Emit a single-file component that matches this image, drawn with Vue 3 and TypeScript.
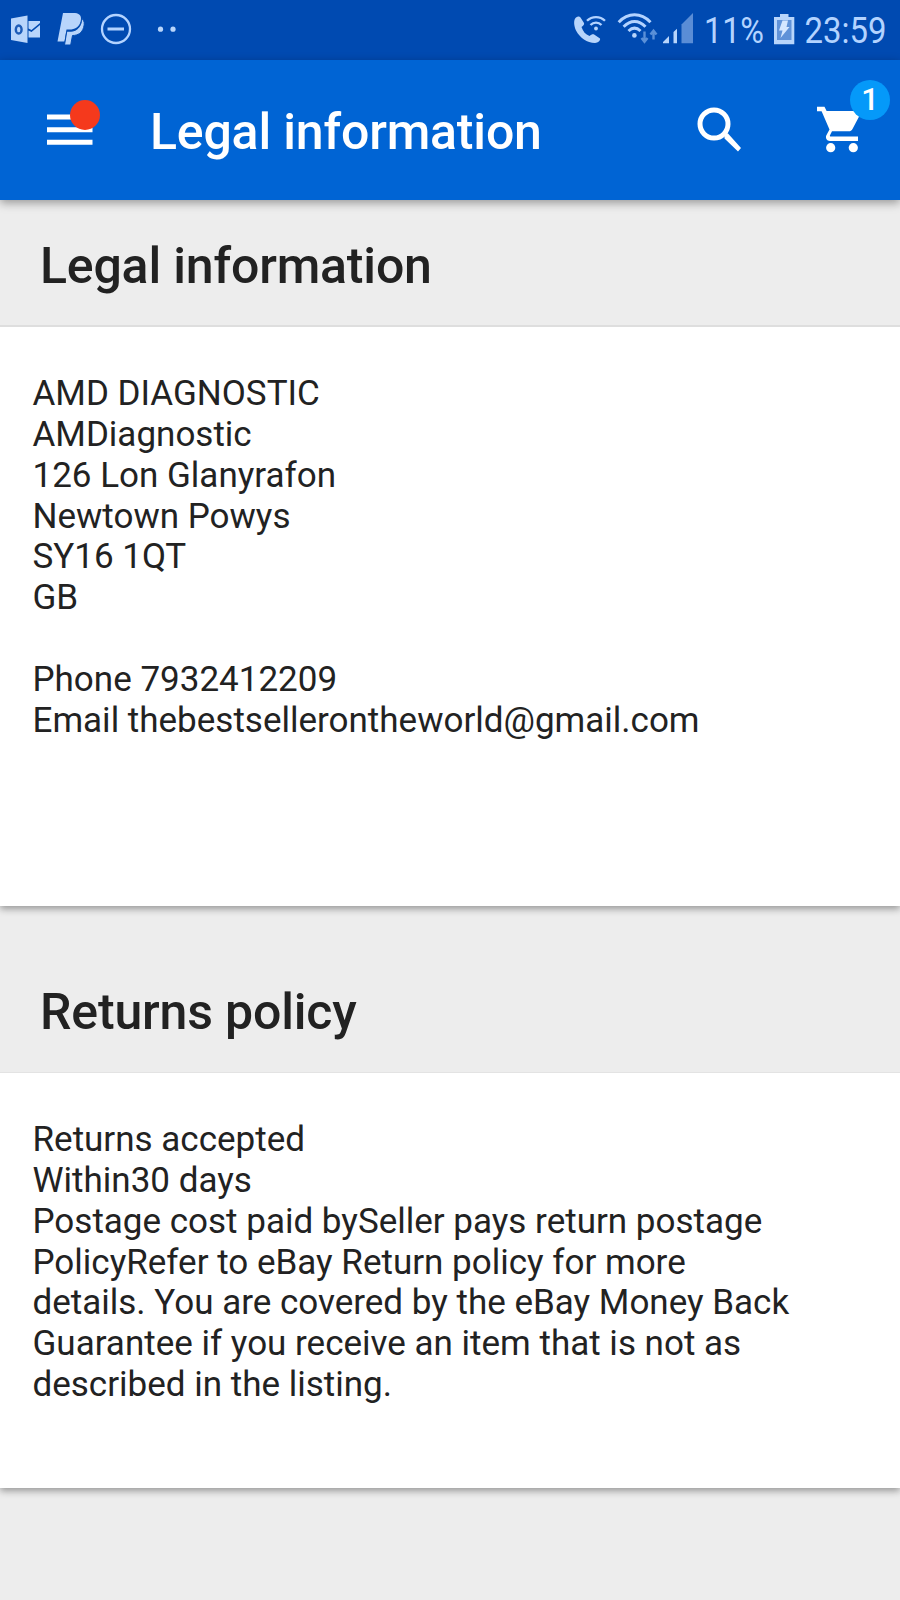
<script setup lang="ts">
interface Section {
  id: string
  title: string
  lines: string[]
}

const sections: Section[] = [
  {
    id: 'legal',
    title: 'Legal information',
    lines: [
      'AMD DIAGNOSTIC',
      'AMDiagnostic',
      '126 Lon Glanyrafon',
      'Newtown Powys',
      'SY16 1QT',
      'GB',
      '',
      'Phone 7932412209',
      'Email thebestsellerontheworld@gmail.com',
    ],
  },
  {
    id: 'returns',
    title: 'Returns policy',
    lines: [
      'Returns accepted',
      'Within30 days',
      'Postage cost paid bySeller pays return postage',
      'PolicyRefer to eBay Return policy for more',
      'details. You are covered by the eBay Money Back',
      'Guarantee if you receive an item that is not as',
      'described in the listing.',
    ],
  },
]
const cartCount = 1
</script>

<template>
  <div class="screen">
    <div class="status">
      <svg class="notifications" width="200" height="60" viewBox="0 0 200 60">
        <path class="fill" d="M11 18.5 27.500 15.500V43L11 40Z" />
        <path class="fill" d="M28.500 21H40V23L31.500 30 28.500 28.500ZM28.500 30.500 31.500 32 40 25V37.500H28.500Z" />
        <ellipse class="zero" cx="18.700" cy="29.500" rx="2.900" ry="4" />
        <path class="fill" d="M63 13H75C80.500 13.500 82 17 80.500 22C78.500 27.500 75 29.500 69.500 29.500H66.500L64.500 41.500H57.500Z" />
        <path class="fill edge" d="M82 18.500C84.500 20.500 84.800 24 83.600 27.500C82 33 78 35.500 72.500 35.500L70.700 45H64.500L66.800 31.200H71C76.500 31 81 27.500 82 18.500Z" />
        <circle class="ring" cx="116" cy="29" r="14" />
        <path class="dash" d="M107.500 29H124" />
        <circle class="fill" cx="160.500" cy="29.200" r="2.600" />
        <circle class="fill" cx="173" cy="29.200" r="2.600" />
      </svg>
      <svg class="system" width="340" height="60" viewBox="560 0 340 60">
        <path class="fill" d="M575.500 18C577.500 16 579.500 16 580.500 17.500L584 23C584.500 24.500 583.500 25.800 581.500 27C583 31.500 585.500 34.500 589.500 36C591.500 34.300 593 33.800 594.500 34.700L600 38.500C600.700 40.500 598 42.700 595 43C587 43 580 38 576 30.500C573.800 25.500 573.500 20.500 575.500 18Z" />
        <path class="wave thin" d="M587 20.800C592 15.800 600 15.800 605 20.800M590.500 25C593.500 21.800 598.500 21.800 601.500 25" />
        <circle class="fill" cx="596" cy="28.500" r="1.900" />
        <path class="wave" d="M618.700 22.200C628 12.300 641 12.300 650.500 22.200M623.600 26.700C630.500 19.800 638.700 19.800 645.500 26.700M628.500 31C632.500 27.200 636.500 27.200 640.500 31" />
        <circle class="fill" cx="634.400" cy="35.400" r="2.300" />
        <path class="traffic" d="M644.500 31.500V41.500M641.500 38 644.500 41.800 647.500 38M653.500 39.500V31M650.500 34.500 653.500 30.700 656.500 34.500" />
        <path class="fill" d="M663 43.300V42L669 36V43.300ZM673.500 43.300V32L677 28.700V43.300Z" />
        <path class="dim" d="M681.500 43.300V24.500L693 13V43.300Z" />
        <text x="704" y="43.200" textLength="60" lengthAdjust="spacingAndGlyphs">11%</text>
        <path class="fill" d="M780 14H788.500V17H794.300V44.200H774V17H780Z" />
        <path class="cell" d="M777 20H791.500V40H777Z" />
        <path class="bolt" d="M782.500 20.500H788L786.500 27H789.500L780.500 38L782.500 30.500H779Z" />
        <text x="804.500" y="43.200" textLength="82" lengthAdjust="spacingAndGlyphs">23:59</text>
      </svg>
    </div>

    <header class="appbar">
      <div class="menu">
        <svg width="46" height="31" viewBox="0 0 46 31">
          <path fill="#fff" d="M0 .5H45.500V5.500H0ZM0 13.300H45.500V18.300H0ZM0 25.700H45.500V30.700H0Z" />
        </svg>
        <span class="alert" />
      </div>
      <h1>Legal information</h1>
      <svg class="search" width="46" height="46" viewBox="0 0 46 46">
        <circle cx="17" cy="17" r="14" fill="none" stroke="#fff" stroke-width="5" />
        <path d="M28 25.500 31 26.500 44 41 41 44.500 27.500 31.500V28.500L25 26Z" fill="#fff" />
      </svg>
      <div class="cart">
        <svg width="46" height="48" viewBox="0 0 46 48">
          <path fill="#fff" d="M0 .7H7.500L9.600 5H42C43.500 5 44.200 6.500 43.400 8L35.500 23C34.700 24.600 33.400 25.300 31.800 25.300H15L13 29.200C12.700 29.900 13 30.500 13.800 30.500H41V35H13C9.600 35 8 31.700 9.500 29L12.500 23.500 4.600 5.200H0Z" />
          <circle cx="13.700" cy="41.700" r="4.600" fill="#fff" />
          <circle cx="36.300" cy="41.700" r="4.600" fill="#fff" />
        </svg>
        <span class="badge">{{ cartCount }}</span>
      </div>
    </header>

    <section v-for="s in sections" :key="s.id" :class="s.id">
      <h2>{{ s.title }}</h2>
      <div class="card">
        <p v-for="(line, i) in s.lines" :key="i">{{ line }}</p>
      </div>
    </section>
  </div>
</template>

<style>
body {
  background: #ededed;
}
</style>

<style scoped>
.screen {
  width: 900px;
  height: 1600px;
  overflow: hidden;
  background: #ededed;
  color: #222;
  font-family: Roboto, "Liberation Sans", sans-serif;
}
.status {
  display: flex;
  justify-content: space-between;
  height: 60px;
  background: #004ab1;
}
.status text {
  fill: #b3d3ff;
  font-size: 37px;
}
.fill {
  fill: #b8d5fb;
}
.edge {
  stroke: #004ab1;
  stroke-width: 1;
}
.zero {
  fill: none;
  stroke: #1d5cb8;
  stroke-width: 2.4;
}
.ring,
.dash,
.wave {
  fill: none;
  stroke: #b3d3ff;
  stroke-width: 2.3;
}
.dash {
  stroke-width: 3;
}
.wave {
  stroke-width: 3;
}
.wave.thin {
  stroke-width: 2.3;
}
.traffic {
  fill: none;
  stroke: #5a90d8;
  stroke-width: 2.4;
}
.dim {
  fill: #5a8dd6;
}
.cell {
  fill: #6092d8;
}
.bolt {
  fill: #d5e7ff;
}
.appbar {
  position: relative;
  display: flex;
  height: 140px;
  background: #0064d4;
  box-shadow: 0 3px 9px rgba(0, 0, 0, 0.36);
}
.menu {
  position: relative;
  width: 46px;
  margin: 54px 0 0 47px;
}
.menu svg,
.cart svg {
  display: block;
}
.alert {
  position: absolute;
  left: 23px;
  top: -14px;
  width: 30px;
  height: 30px;
  border-radius: 50%;
  background: #f5391c;
}
h1,
h2 {
  margin: 0;
  font-size: 50px;
  font-weight: 500;
  letter-spacing: -0.17px;
  line-height: 60px;
  white-space: nowrap;
}
h1 {
  width: 547px;
  margin: 42px 0 0 57px;
  color: #fff;
}
.search {
  margin-top: 47px;
}
.cart {
  position: relative;
  margin: 46px 0 0 74px;
}
.badge {
  position: absolute;
  left: 33px;
  top: -26px;
  width: 40px;
  height: 40px;
  border-radius: 50%;
  background: #0599f9;
  color: #fff;
  font-size: 31px;
  font-weight: 500;
  line-height: 40px;
  text-align: center;
}
h2 {
  padding-left: 40px;
}
.legal h2 {
  padding-top: 36px;
  height: 89px;
  border-bottom: 2px solid #dedede;
}
.returns h2 {
  padding-top: 76px;
  height: 90px;
  border-bottom: 1px solid #e3e3e3;
}
.card {
  box-sizing: border-box;
  padding: 47px 32.5px 0;
  background: #fff;
  box-shadow: 0 3px 7px rgba(0, 0, 0, 0.36);
  clip-path: inset(0 0 -12px);
}
.legal .card {
  height: 579px;
}
.returns .card {
  height: 415px;
}
p {
  height: 40.85px;
  margin: 0;
  font-size: 35px;
  line-height: 40.85px;
  white-space: nowrap;
}
</style>
